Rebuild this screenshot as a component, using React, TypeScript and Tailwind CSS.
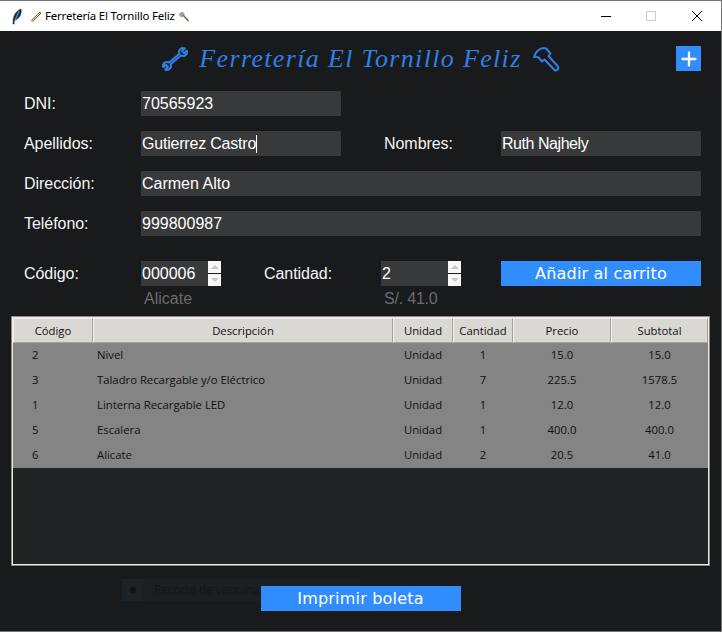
import { Plus } from "lucide-react";

const rows = [
  ["2", "Nivel", "Unidad", "1", "15.0", "15.0"],
  ["3", "Taladro Recargable y/o Eléctrico", "Unidad", "7", "225.5", "1578.5"],
  ["1", "Linterna Recargable LED", "Unidad", "1", "12.0", "12.0"],
  ["5", "Escalera", "Unidad", "1", "400.0", "400.0"],
  ["6", "Alicate", "Unidad", "2", "20.5", "41.0"],
];

const headers = ["Código", "Descripción", "Unidad", "Cantidad", "Precio", "Subtotal"];

const Spanner = () => (
  <svg viewBox="5 5 26 24" fill="none" stroke="currentColor" strokeWidth="2" strokeLinejoin="round" className="h-[24px] w-[26px] overflow-visible">
    <path
      transform="translate(18 17) rotate(49)"
      d="M1.5 -14.3V-10.6H-1.5V-14.3A4 4 0 0 0 -1.2 -6.8V6.8A4 4 0 0 0 -1.5 14.3V10.6H1.5V14.3A4 4 0 0 0 1.2 6.8V-6.8A4 4 0 0 0 1.5 -14.3Z"
    />
  </svg>
);

const Hammer = () => (
  <svg viewBox="5 5 26 24" fill="none" stroke="currentColor" strokeWidth="2" strokeLinejoin="round" className="h-[24px] w-[26px] overflow-visible">
    <path d="M6 15C7 10.5 11 6.5 15.5 6L18 6.5L22.5 11.5L20.5 14L29.5 24A2.3 2.3 0 0 1 26 27.5L16.5 17.5L14 19.5L10.5 15.5C9 14.5 7.5 14.5 6 15Z" />
  </svg>
);

const Field = ({ value, caret, tight }: { value: string; caret?: boolean; tight?: string }) => (
  <div className="flex h-[25px] items-center bg-[#38393b] pl-px text-[16px] text-white">
    <span className={tight}>{value}</span>
    {caret && <span className="h-[18px] w-px bg-white" />}
  </div>
);

const Spin = ({ value }: { value: string }) => (
  <div className="flex h-[25px]">
    <div className="flex w-[67px] items-center bg-[#38393b] pl-px text-[16px] text-white">{value}</div>
    <div className="flex w-[13px] flex-col gap-px">
      <div className="flex flex-1 items-center justify-center bg-[#f8f8f8]">
        <span className="border-x-[4px] border-b-[4px] border-x-transparent border-b-[#c8c8c8]" />
      </div>
      <div className="flex flex-1 items-center justify-center bg-[#f8f8f8]">
        <span className="border-x-[4px] border-t-[4px] border-x-transparent border-t-[#c8c8c8]" />
      </div>
    </div>
  </div>
);

const Label = ({ children }: { children: string }) => (
  <div className="flex h-[25px] items-center text-[16px] tracking-[-0.05px] text-[#f4f4f4]">{children}</div>
);

export default function App() {
  return (
    <div className="relative flex h-[632px] w-[722px] flex-col overflow-hidden border-t border-r border-b border-[#777777] bg-[#191a1c] font-['Liberation_Sans',sans-serif]">
      {/* title bar */}
      <div className="flex h-[30px] shrink-0 items-center bg-white pl-[12px] text-black">
        <svg viewBox="0 0 10 17" className="h-[17px] w-[10px]">
          <path d="M1 16C1 10 2 4 9 1C10 6 7 11 3 12L2 16Z" fill="#16324f" stroke="#0b1a2b" strokeWidth=".6" />
          <path d="M7 3L2 15" stroke="#8fc2ee" strokeWidth=".8" />
        </svg>
        <svg viewBox="0 0 11 11" className="ml-[9px] h-[11px] w-[11px]">
          <path d="M1.5 9.5L9 2" stroke="#7a5a3a" strokeWidth="2.4" strokeLinecap="round" />
          <path d="M1.5 9.5L9 2" stroke="#dfe8ee" strokeWidth="1" strokeLinecap="round" />
        </svg>
        <span className="ml-[3px] font-['Noto_Sans',sans-serif] text-[11.5px] tracking-[-0.2px]">Ferretería El Tornillo Feliz</span>
        <svg viewBox="0 0 11 11" className="ml-[3px] h-[11px] w-[11px]">
          <path d="M4 3L10 9.5" stroke="#8a6a4a" strokeWidth="1.8" strokeLinecap="round" />
          <path d="M1 3.5L4 1L6.5 3L3.5 6Z" fill="#9aa3aa" stroke="#667" strokeWidth=".5" />
        </svg>
        <div className="ml-auto flex items-center pr-[1px]">
          <svg viewBox="0 0 10 10" className="mr-[35px] h-[10px] w-[10px]">
            <path d="M0 5.5H10" stroke="#000" strokeWidth="1" />
          </svg>
          <svg viewBox="0 0 10 10" className="mr-[36px] h-[10px] w-[10px]">
            <rect x=".5" y=".5" width="9" height="9" fill="none" stroke="#cccccc" strokeWidth="1" />
          </svg>
          <svg viewBox="0 0 10 10" className="mr-[18px] h-[10px] w-[10px]">
            <path d="M0 0L10 10M10 0L0 10" stroke="#000" strokeWidth="1" />
          </svg>
        </div>
      </div>

      {/* heading */}
      <div className="grid h-[60px] shrink-0 grid-cols-[1fr_auto_1fr] items-start pt-[15px] pr-[20px] pl-[20px]">
        <div />
        <div className="flex h-[25px] items-center text-[#2f7fe6]">
          <Spanner />
          <span className="mx-[11px] font-['Liberation_Serif',serif] text-[26px] tracking-[1.34px] italic">Ferretería El Tornillo Feliz</span>
          <Hammer />
        </div>
        <div className="flex justify-end">
          <div className="flex h-[25px] w-[25px] items-center justify-center bg-[#318cfe] text-white">
            <Plus size={22} strokeWidth={2.5} />
          </div>
        </div>
      </div>

      {/* customer form */}
      <div className="grid grid-cols-[117px_200px_43px_117px_200px] gap-y-[15px] pl-[24px]">
        <Label>DNI:</Label>
        <Field value="70565923" />
        <div className="col-span-3" />
        <Label>Apellidos:</Label>
        <Field value="Gutierrez Castro" caret tight="tracking-[-0.2px]" />
        <div />
        <Label>Nombres:</Label>
        <Field value="Ruth Najhely" tight="tracking-[-0.45px]" />
        <Label>Dirección:</Label>
        <div className="col-span-4"><Field value="Carmen Alto" /></div>
        <Label>Teléfono:</Label>
        <div className="col-span-4"><Field value="999800987" /></div>
      </div>

      {/* product picker */}
      <div className="mt-[25px] grid grid-cols-[117px_80px_43px_117px_80px_40px_200px] pl-[24px]">
        <Label>Código:</Label>
        <Spin value="000006" />
        <div />
        <Label>Cantidad:</Label>
        <Spin value="2" />
        <div />
        <div className="flex h-[25px] items-center justify-center bg-[#318cfe] font-['DejaVu_Sans',sans-serif] text-[16px] tracking-[0.2px] text-white">Añadir al carrito</div>
        <div />
        <div className="pt-[2px] pl-[3px] text-[16px] leading-[22px] text-[#6b6b6b]">Alicate</div>
        <div />
        <div />
        <div className="pt-[2px] pl-[3px] text-[16px] leading-[22px] tracking-[-0.2px] text-[#6b6b6b]">S/. 41.0</div>
      </div>

      {/* cart table */}
      <div className="mx-[11px] mt-[6px] h-[250px] border border-[#8c8a84]">
        <div className="h-full border border-[#eceae3] bg-[#222325] font-['Open_Sans',sans-serif] text-[11.3px] text-[#111111]">
          <div className="grid h-[25px] grid-cols-[80px_300px_60px_60px_98px_1fr] bg-[#d9d8d3]">
            {headers.map((h) => (
              <div key={h} className="flex items-center justify-center border-t border-r border-b border-l border-t-[#f1f0ec] border-r-[#a5a39c] border-b-[#a5a39c] border-l-[#f1f0ec] pt-px">{h}</div>
            ))}
          </div>
          {rows.map((r) => (
            <div key={r[0]} className="grid h-[25px] grid-cols-[80px_300px_60px_60px_98px_1fr] items-center bg-[#848484]">
              <div className="pl-[19px]">{r[0]}</div>
              <div className="pl-[4px]">{r[1]}</div>
              {r.slice(2).map((c, i) => (
                <div key={i} className="text-center">{c}</div>
              ))}
            </div>
          ))}
        </div>
      </div>

      {/* footer */}
      <div className="relative z-10 mt-[20px] flex justify-center">
        <div className="flex h-[25px] w-[200px] items-center justify-center bg-[#318cfe] font-['DejaVu_Sans',sans-serif] text-[16px] tracking-[0.2px] text-white">Imprimir boleta</div>
      </div>

      {/* snipping tool toast showing through the window */}
      <div className="absolute top-[578px] left-[122px] flex h-[22px] w-[238px] items-center bg-[#1c1e21] font-['Open_Sans',sans-serif] text-[12px] whitespace-nowrap text-[#14151a]">
        <div className="flex h-full w-[21px] items-center justify-center bg-[#1b2329]">
          <span className="h-[6px] w-[6px] rounded-full bg-[#111214]" />
        </div>
        <span className="ml-[11px] tracking-[-0.15px]">Recorte de ventana</span>
      </div>
    </div>
  );
}
